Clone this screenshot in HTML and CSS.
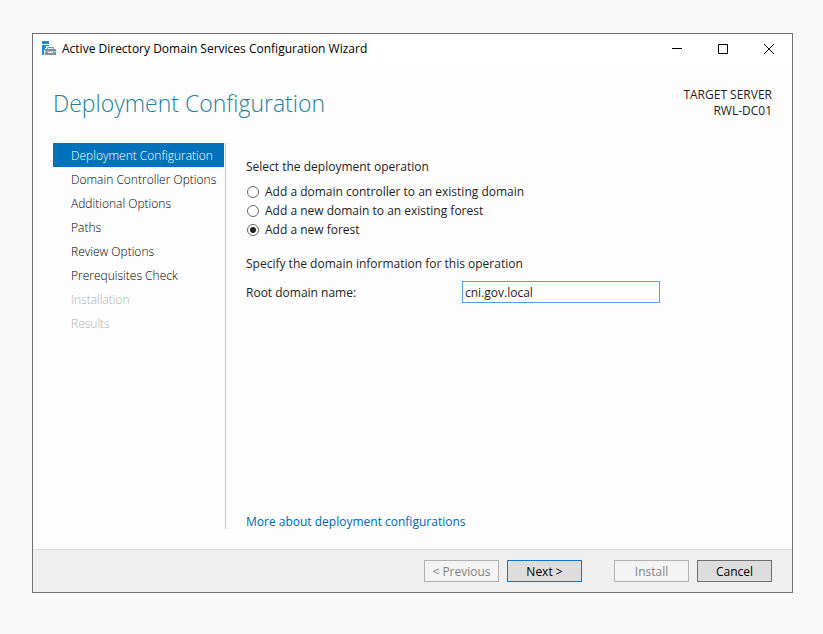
FILE: index.html
```html
<!DOCTYPE html>
<html lang="en">
<head>
<meta charset="utf-8">
<title>Active Directory Domain Services Configuration Wizard</title>
<link rel="stylesheet" href="styles.css">
</head>
<body>
<main class="window">
  <header class="titlebar">
    <svg class="app-icon" width="16" height="16" viewBox="0 0 16 16" aria-hidden="true">
      <path fill="#1e8ad6" d="M1 0h7v3H1zM1 4h7v1H5v2H4v2H3v5H1z"/>
      <path fill="#7590a8" d="M4 8h11v2H4zM4 11h3v1h5v-1h3v3H4z"/>
      <path fill="#b4c3cf" d="M4 10h11v1H4z"/>
      <path fill="none" stroke="#7590a8" d="M6.500 8V6.500h6V8"/>
    </svg>
    <span class="title">Active Directory Domain Services Configuration Wizard</span>
    <div class="controls">
      <button class="control" type="button" aria-label="Minimize"><svg width="12" height="12"><path d="M1 5.500h10"/></svg></button>
      <button class="control" type="button" aria-label="Maximize"><svg width="12" height="12"><path d="M1.500 1.500h9v9h-9z"/></svg></button>
      <button class="control" type="button" aria-label="Close"><svg width="12" height="12"><path d="M1 1l10 10M11 1L1 11"/></svg></button>
    </div>
  </header>
  <section class="heading">
    <h1>Deployment Configuration</h1>
    <p class="server">TARGET SERVER<br>RWL-DC01</p>
  </section>
  <div class="body">
    <nav class="steps">
      <a class="step current" href="#">Deployment Configuration</a>
      <a class="step" href="#">Domain Controller Options</a>
      <a class="step" href="#">Additional Options</a>
      <a class="step" href="#">Paths</a>
      <a class="step" href="#">Review Options</a>
      <a class="step" href="#">Prerequisites Check</a>
      <span class="step disabled">Installation</span>
      <span class="step disabled">Results</span>
    </nav>
    <form class="content" id="wizard">
      <fieldset class="operations">
        <legend>Select the deployment operation</legend>
        <label><input type="radio" name="operation">Add a domain controller to an existing domain</label>
        <label><input type="radio" name="operation">Add a new domain to an existing forest</label>
        <label><input type="radio" name="operation" checked>Add a new forest</label>
      </fieldset>
      <p class="specify">Specify the domain information for this operation</p>
      <div class="field">
        <label for="root">Root domain name:</label>
        <input class="textbox" id="root" type="text" value="cni.gov.local">
      </div>
      <a class="more" href="#">More about deployment configurations</a>
    </form>
  </div>
  <footer class="actions">
    <button class="button" type="button" disabled>&lt; Previous</button>
    <button class="button primary" type="button">Next &gt;</button>
    <button class="button install" type="button" disabled>Install</button>
    <button class="button" type="button">Cancel</button>
  </footer>
</main>
</body>
</html>
```
FILE: styles.css
```css
* { box-sizing: border-box; }
body {
  margin: 0;
  min-height: 100vh;
  padding: 33px 30px 41px 32px;
  display: flex;
  background: #f8f8f8;
  color: #1e1e1e;
  font: 12px/16px "Open Sans", sans-serif;
}
button, input { font: inherit; color: inherit; }
.window {
  flex: 1;
  display: flex;
  flex-direction: column;
  border: 1px solid #707070;
  background: #fdfdfd;
}
.titlebar {
  display: flex;
  align-items: center;
  height: 30px;
  padding-left: 8px;
  background: #fff;
  color: #000;
}
.title { margin-left: 5px; }
.controls { display: flex; margin-left: auto; }
.control {
  width: 46px;
  height: 30px;
  padding: 0;
  border: 0;
  background: none;
  display: flex;
  align-items: center;
  justify-content: center;
}
.control svg { fill: none; stroke: #000; }
.heading {
  display: flex;
  justify-content: space-between;
  align-items: flex-start;
  padding: 23px 20px 0;
}
h1 {
  margin: 0;
  color: #1f7f9c;
  font: 300 23px/32px "Open Sans", sans-serif;
}
.server {
  margin: 0;
  text-align: right;
}
.body {
  flex: 1;
  display: flex;
  padding: 24px 20px 20px;
}
.steps {
  width: 173px;
  border-right: 1px solid #c8c8c8;
}
.step {
  display: block;
  height: 24px;
  margin-right: 1px;
  padding: 1px 0 0 18px;
  line-height: 24px;
  font-weight: 300;
  white-space: nowrap;
  color: #000;
  text-decoration: none;
}
.step.current { background: #0072bc; color: #fff; }
.step.disabled { color: #b0b0b0; }
.content {
  flex: 1;
  display: flex;
  flex-direction: column;
  padding: 16px 0 0 20px;
}
.operations { margin: 0; padding: 0; border: 0; }
legend { padding: 0; margin-bottom: 7px; }
.operations label {
  display: flex;
  align-items: center;
  height: 19px;
}
.operations input {
  appearance: none;
  display: grid;
  place-items: center;
  width: 12px;
  height: 12px;
  margin: 0 6px 0 1px;
  border: 1px solid #666;
  border-radius: 50%;
  background: #fff;
}
.operations input:checked::before {
  content: "";
  width: 6px;
  height: 6px;
  border-radius: 50%;
  background: #222;
}
.specify { margin: 17px 0 9px; }
.field { display: flex; align-items: center; }
.field label { width: 216px; padding-top: 2px; }
.textbox {
  width: 198px;
  height: 22px;
  padding: 1px 2px 0;
  border: 1px solid #569de5;
  background: #fff;
}
.more { margin-top: auto; line-height: 14px; color: #0066b0; text-decoration: none; }
.actions {
  display: flex;
  justify-content: flex-end;
  gap: 8px;
  padding: 10px 20px;
  border-top: 1px solid #dadada;
  background: #efefef;
}
.button {
  width: 75px;
  height: 22px;
  padding: 2px 0 0;
  border: 1px solid #707070;
  background: #ddd;
  color: #000;
}
.primary { border-color: #0078d7; }
.button:disabled { border-color: #adb2b5; background: #f4f4f4; color: #838383; }
.install { margin-left: 24px; }
```
